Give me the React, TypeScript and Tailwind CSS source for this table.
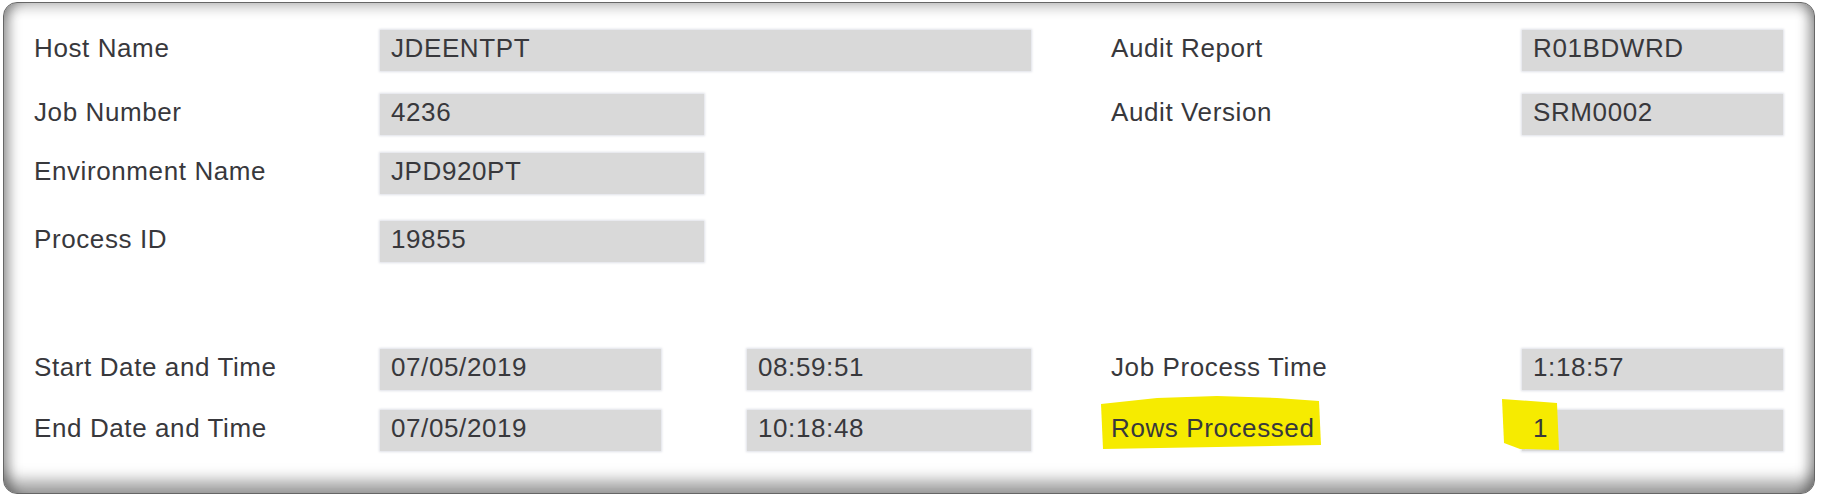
import React from "react";

const textCls =
  "text-[26px] leading-[30px] tracking-[0.6px] text-[#38383c] whitespace-nowrap font-[family-name:'Liberation_Sans',Arial,sans-serif]";

function Label({ className = "", children }: { className?: string; children?: React.ReactNode }) {
  return <div className={`${textCls} pt-[3px] ${className}`}>{children}</div>;
}

function Box({ className = "", children }: { className?: string; children?: React.ReactNode }) {
  return (
    <div
      className={`h-[41px] bg-[#d9d9d9] pl-[11px] pt-[3px] shadow-[0_0_2px_1px_rgba(215,218,225,0.8)] ${textCls} ${className}`}
    >
      {children}
    </div>
  );
}

export default function App() {
  return (
    <div className="w-[1821px] h-[497px] bg-white pt-[2px] pl-[3px] font-[family-name:'Liberation_Sans',Arial,sans-serif]">
      <div className="w-[1812px] h-[492px] rounded-[14px] border border-[#666666] bg-white pt-[27px] pl-[30px] shadow-[inset_0_-20px_16px_-8px_rgba(0,0,0,0.38),inset_14px_0_12px_-8px_rgba(0,0,0,0.34),inset_-14px_0_12px_-8px_rgba(0,0,0,0.34),inset_0_14px_12px_-8px_rgba(0,0,0,0.2)]">
        {/* Row 1 */}
        <div className="flex items-start h-[41px]">
          <Label className="w-[346px]">Host Name</Label>
          <div className="w-[651px] flex">
            <Box className="w-[651px]">JDEENTPT</Box>
          </div>
          <div className="w-[80px]" />
          <Label className="w-[411px]">Audit Report</Label>
          <Box className="w-[261px]">R01BDWRD</Box>
        </div>

        {/* Row 2 */}
        <div className="flex items-start h-[41px] mt-[23px]">
          <Label className="w-[346px]">Job Number</Label>
          <div className="w-[651px] flex">
            <Box className="w-[324px]">4236</Box>
          </div>
          <div className="w-[80px]" />
          <Label className="w-[411px]">Audit Version</Label>
          <Box className="w-[261px]">SRM0002</Box>
        </div>

        {/* Row 3 */}
        <div className="flex items-start h-[41px] mt-[18px]">
          <Label className="w-[346px]">Environment Name</Label>
          <div className="w-[651px] flex">
            <Box className="w-[324px]">JPD920PT</Box>
          </div>
        </div>

        {/* Row 4 */}
        <div className="flex items-start h-[41px] mt-[27px]">
          <Label className="w-[346px]">Process ID</Label>
          <div className="w-[651px] flex">
            <Box className="w-[324px]">19855</Box>
          </div>
        </div>

        {/* Row 5 */}
        <div className="flex items-start h-[41px] mt-[87px]">
          <Label className="w-[346px]">Start Date and Time</Label>
          <div className="w-[651px] flex gap-[86px]">
            <Box className="w-[281px]">07/05/2019</Box>
            <Box className="w-[284px]">08:59:51</Box>
          </div>
          <div className="w-[80px]" />
          <Label className="w-[411px]">Job Process Time</Label>
          <Box className="w-[261px]">1:18:57</Box>
        </div>

        {/* Row 6 */}
        <div className="flex items-start h-[41px] mt-[20px]">
          <Label className="w-[346px]">End Date and Time</Label>
          <div className="w-[651px] flex gap-[86px]">
            <Box className="w-[281px]">07/05/2019</Box>
            <Box className="w-[284px]">10:18:48</Box>
          </div>
          <div className="w-[80px]" />
          <div className="w-[411px] relative">
            <svg
              className="absolute left-[-14px] top-[-15px]"
              width="232"
              height="56"
              viewBox="0 0 232 56"
            >
              <polygon
                points="4,9 60,3 120,1 180,3 222,6 224,50 120,52 6,54"
                fill="#f6eb00"
              />
            </svg>
            <div className={`relative ${textCls} pt-[3px] text-[#2f2f22]`}>Rows Processed</div>
          </div>
          <div className="relative w-[261px]">
            <Box className="w-[261px]">{""}</Box>
            <svg
              className="absolute left-[-24px] top-[-15px]"
              width="64"
              height="58"
              viewBox="0 0 64 58"
            >
              <polygon points="4,4 59,8 61,55 22,54 6,48" fill="#f6eb00" />
            </svg>
            <div className={`absolute left-[11px] top-[3px] ${textCls} text-[#2f2f22]`}>1</div>
          </div>
        </div>
      </div>
    </div>
  );
}
